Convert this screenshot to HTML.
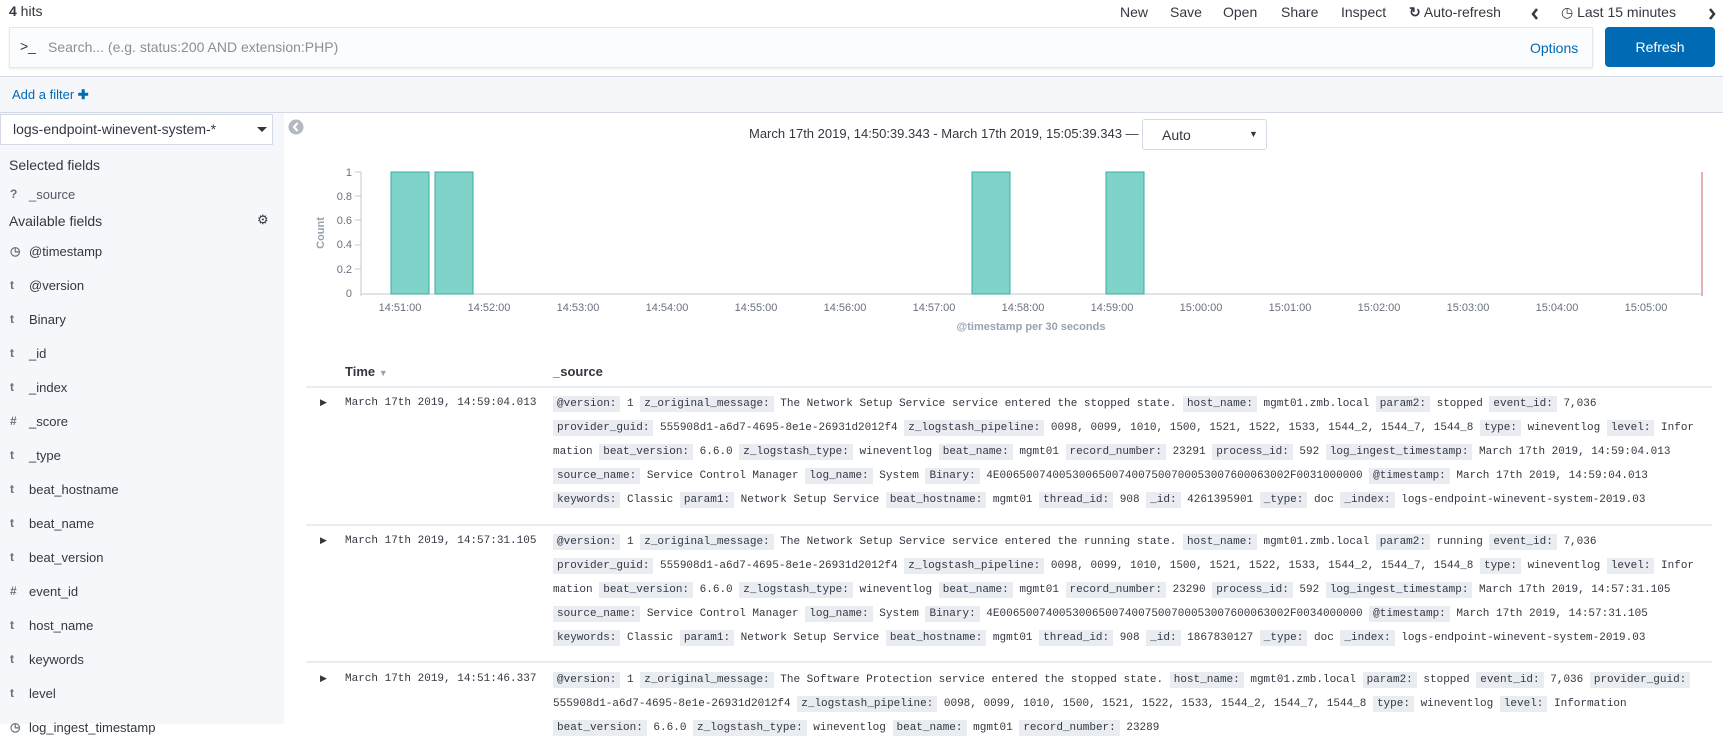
<!DOCTYPE html>
<html><head><meta charset="utf-8"><style>
*{box-sizing:border-box;margin:0;padding:0}
body{width:1723px;height:724px;overflow:hidden;background:#fff;font-family:"Liberation Sans",sans-serif;color:#343741;position:relative;font-size:14px}
.a{position:absolute;white-space:nowrap}
.menu{top:4px;font-size:14px;color:#343741}
.side{position:absolute;left:0;top:113px;width:284px;height:611px;background:#f5f7fa}
.f{position:absolute;left:29px;font-size:13px;white-space:nowrap}
.fi{position:absolute;left:10px;font-size:12px;color:#69707d;font-weight:bold;white-space:nowrap}
.mono{font-family:"Liberation Mono",monospace;font-size:11px;color:#343741}
.l{background:#e9edf2;padding:2px 4px;font-weight:normal}
.src .ln{position:absolute;left:553px;white-space:nowrap;font-family:"Liberation Mono",monospace;font-size:11px;line-height:16px}
</style></head><body>
<div class="a" style="left:9px;top:3px;font-size:14px"><b>4</b> hits</div>
<div class="a menu" style="left:1120px">New</div>
<div class="a menu" style="left:1170px">Save</div>
<div class="a menu" style="left:1223px">Open</div>
<div class="a menu" style="left:1281px">Share</div>
<div class="a menu" style="left:1341px">Inspect</div>
<div class="a menu" style="left:1409px"><b>&#x21bb;</b> Auto-refresh</div>
<svg class="a" style="left:1530px;top:7px" width="10" height="14"><path d="M7 2 L3 7 L7 12" stroke="#343741" stroke-width="2.5" fill="none"/></svg>
<div class="a menu" style="left:1561px">&#x25F7; Last 15 minutes</div>
<svg class="a" style="left:1707px;top:7px" width="10" height="14"><path d="M3 2 L7 7 L3 12" stroke="#343741" stroke-width="2.5" fill="none"/></svg>
<div class="a" style="left:9px;top:27px;width:1584px;height:41px;background:#fbfcfd;border:1px solid #e3e8ef;box-shadow:0 1px 2px rgba(0,0,0,.08)"></div>
<div class="a" style="left:20px;top:38px;font-size:14px;color:#343741">&gt;_</div>
<div class="a" style="left:48px;top:39px;font-size:14px;color:#8a8f99">Search... (e.g. status:200 AND extension:PHP)</div>
<div class="a" style="left:1530px;top:40px;font-size:14px;color:#006bb4">Options</div>
<div class="a" style="left:1605px;top:27px;width:110px;height:40px;background:#006bb4;border-radius:4px;color:#fff;font-size:14px;text-align:center;line-height:40px">Refresh</div>
<div class="a" style="left:0;top:76px;width:1723px;height:37px;background:#f5f7fa;border-top:1px solid #d3dae6;border-bottom:1px solid #d3dae6"></div>
<div class="a" style="left:12px;top:87px;font-size:13px;color:#006bb4">Add a filter <b>&#x271A;</b></div>
<div class="side"></div>
<div class="a" style="left:0;top:114px;width:273px;height:31px;background:#fff;border:1px solid #d3dae6"></div>
<div class="a" style="left:13px;top:121px;font-size:14px">logs-endpoint-winevent-system-*</div>
<svg class="a" style="left:257px;top:127px" width="10" height="6"><path d="M0 0 L10 0 L5 5 Z" fill="#343741"/></svg>
<svg class="a" style="left:288px;top:119px" width="16" height="16"><circle cx="8" cy="8" r="7.5" fill="#b4b8bf"/><path d="M9.5 4 L6 8 L9.5 12" stroke="#fff" stroke-width="2.2" fill="none"/></svg>
<div class="a" style="left:9px;top:157px;font-size:14px">Selected fields</div>
<div class="fi" style="top:187px">?</div><div class="f" style="top:187px;color:#535966">_source</div>
<div class="a" style="left:9px;top:213px;font-size:14px">Available fields</div>
<div class="a" style="left:257px;top:212px;font-size:13px">&#x2699;</div>
<div class="fi" style="top:244px">&#x25F7;</div><div class="f" style="top:244px">@timestamp</div>
<div class="fi" style="top:278px">t</div><div class="f" style="top:278px">@version</div>
<div class="fi" style="top:312px">t</div><div class="f" style="top:312px">Binary</div>
<div class="fi" style="top:346px">t</div><div class="f" style="top:346px">_id</div>
<div class="fi" style="top:380px">t</div><div class="f" style="top:380px">_index</div>
<div class="fi" style="top:414px">#</div><div class="f" style="top:414px">_score</div>
<div class="fi" style="top:448px">t</div><div class="f" style="top:448px">_type</div>
<div class="fi" style="top:482px">t</div><div class="f" style="top:482px">beat_hostname</div>
<div class="fi" style="top:516px">t</div><div class="f" style="top:516px">beat_name</div>
<div class="fi" style="top:550px">t</div><div class="f" style="top:550px">beat_version</div>
<div class="fi" style="top:584px">#</div><div class="f" style="top:584px">event_id</div>
<div class="fi" style="top:618px">t</div><div class="f" style="top:618px">host_name</div>
<div class="fi" style="top:652px">t</div><div class="f" style="top:652px">keywords</div>
<div class="fi" style="top:686px">t</div><div class="f" style="top:686px">level</div>
<div class="fi" style="top:720px">&#x25F7;</div><div class="f" style="top:720px">log_ingest_timestamp</div>

<div class="a" style="left:749px;top:126px;font-size:13px">March 17th 2019, 14:50:39.343 - March 17th 2019, 15:05:39.343 —</div>
<div class="a" style="left:1142px;top:119px;width:125px;height:31px;border:1px solid #d3dae6;border-radius:3px;background:#fff"></div>
<div class="a" style="left:1162px;top:127px;font-size:14px">Auto</div>
<div class="a" style="left:1249px;top:129px;font-size:9px">&#x25BC;</div>

<svg class="a" style="left:0;top:0" width="1723" height="724">
<g font-family="Liberation Sans,sans-serif" font-size="11" fill="#69707d" text-anchor="end">
<text x="352" y="176">1</text><text x="352" y="200">0.8</text><text x="352" y="224">0.6</text><text x="352" y="248">0.4</text><text x="352" y="273">0.2</text><text x="352" y="297">0</text></g>
<g stroke="#c5c8cd"><line x1="361" y1="172" x2="361" y2="296"/><line x1="361" y1="294" x2="1702" y2="294"/>
<line x1="355" y1="172" x2="361" y2="172"/><line x1="355" y1="196" x2="361" y2="196"/><line x1="355" y1="220" x2="361" y2="220"/><line x1="355" y1="245" x2="361" y2="245"/><line x1="355" y1="269" x2="361" y2="269"/></g>
<text transform="translate(324,233) rotate(-90)" font-family="Liberation Sans,sans-serif" font-size="11" font-weight="bold" fill="#98a2b3" text-anchor="middle">Count</text>
<g fill="#80d3c8" stroke="#3aada0"><rect x="391" y="172" width="38" height="122"/><rect x="435" y="172" width="38" height="122"/><rect x="972" y="172" width="38" height="122"/><rect x="1106" y="172" width="38" height="122"/></g>
<line x1="1702" y1="172" x2="1702" y2="296" stroke="#e7b1b5" stroke-width="2"/>
<g font-family="Liberation Sans,sans-serif" font-size="11" fill="#69707d" text-anchor="middle">
<text x="400" y="311">14:51:00</text><text x="489" y="311">14:52:00</text><text x="578" y="311">14:53:00</text><text x="667" y="311">14:54:00</text><text x="756" y="311">14:55:00</text><text x="845" y="311">14:56:00</text><text x="934" y="311">14:57:00</text><text x="1023" y="311">14:58:00</text><text x="1112" y="311">14:59:00</text><text x="1201" y="311">15:00:00</text><text x="1290" y="311">15:01:00</text><text x="1379" y="311">15:02:00</text><text x="1468" y="311">15:03:00</text><text x="1557" y="311">15:04:00</text><text x="1646" y="311">15:05:00</text>
<text x="1031" y="330" font-weight="bold" fill="#98a2b3">@timestamp per 30 seconds</text></g>
<line x1="306" y1="387" x2="1712" y2="387" stroke="#d3dae6"/>
<line x1="306" y1="525" x2="1712" y2="525" stroke="#d3dae6"/>
<line x1="306" y1="662" x2="1712" y2="662" stroke="#d3dae6"/>
</svg>
<div class="a" style="left:345px;top:364px;font-size:13px;font-weight:bold">Time <span style="color:#98a2b3;font-size:9px">&#x25BC;</span></div>
<div class="a" style="left:553px;top:364px;font-size:13px;font-weight:bold">_source</div>

<div class="a" style="left:320px;top:397px;font-size:9px">&#x25B6;</div>
<div class="a mono" style="left:345px;top:397px">March 17th 2019, 14:59:04.013</div>
<div class="src">
<div class="ln" style="top:396px"><span class="l">@version:</span> 1 <span class="l">z_original_message:</span> The Network Setup Service service entered the stopped state. <span class="l">host_name:</span> mgmt01.zmb.local <span class="l">param2:</span> stopped <span class="l">event_id:</span> 7,036</div>
<div class="ln" style="top:420px"><span class="l">provider_guid:</span> 555908d1-a6d7-4695-8e1e-26931d2012f4 <span class="l">z_logstash_pipeline:</span> 0098, 0099, 1010, 1500, 1521, 1522, 1533, 1544_2, 1544_7, 1544_8 <span class="l">type:</span> wineventlog <span class="l">level:</span> Infor</div>
<div class="ln" style="top:444px">mation <span class="l">beat_version:</span> 6.6.0 <span class="l">z_logstash_type:</span> wineventlog <span class="l">beat_name:</span> mgmt01 <span class="l">record_number:</span> 23291 <span class="l">process_id:</span> 592 <span class="l">log_ingest_timestamp:</span> March 17th 2019, 14:59:04.013</div>
<div class="ln" style="top:468px"><span class="l">source_name:</span> Service Control Manager <span class="l">log_name:</span> System <span class="l">Binary:</span> 4E00650074005300650074007500700053007600063002F0031000000 <span class="l">@timestamp:</span> March 17th 2019, 14:59:04.013</div>
<div class="ln" style="top:492px"><span class="l">keywords:</span> Classic <span class="l">param1:</span> Network Setup Service <span class="l">beat_hostname:</span> mgmt01 <span class="l">thread_id:</span> 908 <span class="l">_id:</span> 4261395901 <span class="l">_type:</span> doc <span class="l">_index:</span> logs-endpoint-winevent-system-2019.03</div>
</div>

<div class="a" style="left:320px;top:535px;font-size:9px">&#x25B6;</div>
<div class="a mono" style="left:345px;top:535px">March 17th 2019, 14:57:31.105</div>
<div class="src">
<div class="ln" style="top:534px"><span class="l">@version:</span> 1 <span class="l">z_original_message:</span> The Network Setup Service service entered the running state. <span class="l">host_name:</span> mgmt01.zmb.local <span class="l">param2:</span> running <span class="l">event_id:</span> 7,036</div>
<div class="ln" style="top:558px"><span class="l">provider_guid:</span> 555908d1-a6d7-4695-8e1e-26931d2012f4 <span class="l">z_logstash_pipeline:</span> 0098, 0099, 1010, 1500, 1521, 1522, 1533, 1544_2, 1544_7, 1544_8 <span class="l">type:</span> wineventlog <span class="l">level:</span> Infor</div>
<div class="ln" style="top:582px">mation <span class="l">beat_version:</span> 6.6.0 <span class="l">z_logstash_type:</span> wineventlog <span class="l">beat_name:</span> mgmt01 <span class="l">record_number:</span> 23290 <span class="l">process_id:</span> 592 <span class="l">log_ingest_timestamp:</span> March 17th 2019, 14:57:31.105</div>
<div class="ln" style="top:606px"><span class="l">source_name:</span> Service Control Manager <span class="l">log_name:</span> System <span class="l">Binary:</span> 4E00650074005300650074007500700053007600063002F0034000000 <span class="l">@timestamp:</span> March 17th 2019, 14:57:31.105</div>
<div class="ln" style="top:630px"><span class="l">keywords:</span> Classic <span class="l">param1:</span> Network Setup Service <span class="l">beat_hostname:</span> mgmt01 <span class="l">thread_id:</span> 908 <span class="l">_id:</span> 1867830127 <span class="l">_type:</span> doc <span class="l">_index:</span> logs-endpoint-winevent-system-2019.03</div>
</div>

<div class="a" style="left:320px;top:673px;font-size:9px">&#x25B6;</div>
<div class="a mono" style="left:345px;top:673px">March 17th 2019, 14:51:46.337</div>
<div class="src">
<div class="ln" style="top:672px"><span class="l">@version:</span> 1 <span class="l">z_original_message:</span> The Software Protection service entered the stopped state. <span class="l">host_name:</span> mgmt01.zmb.local <span class="l">param2:</span> stopped <span class="l">event_id:</span> 7,036 <span class="l">provider_guid:</span></div>
<div class="ln" style="top:696px">555908d1-a6d7-4695-8e1e-26931d2012f4 <span class="l">z_logstash_pipeline:</span> 0098, 0099, 1010, 1500, 1521, 1522, 1533, 1544_2, 1544_7, 1544_8 <span class="l">type:</span> wineventlog <span class="l">level:</span> Information</div>
<div class="ln" style="top:720px"><span class="l">beat_version:</span> 6.6.0 <span class="l">z_logstash_type:</span> wineventlog <span class="l">beat_name:</span> mgmt01 <span class="l">record_number:</span> 23289</div>
</div>
</body></html>
